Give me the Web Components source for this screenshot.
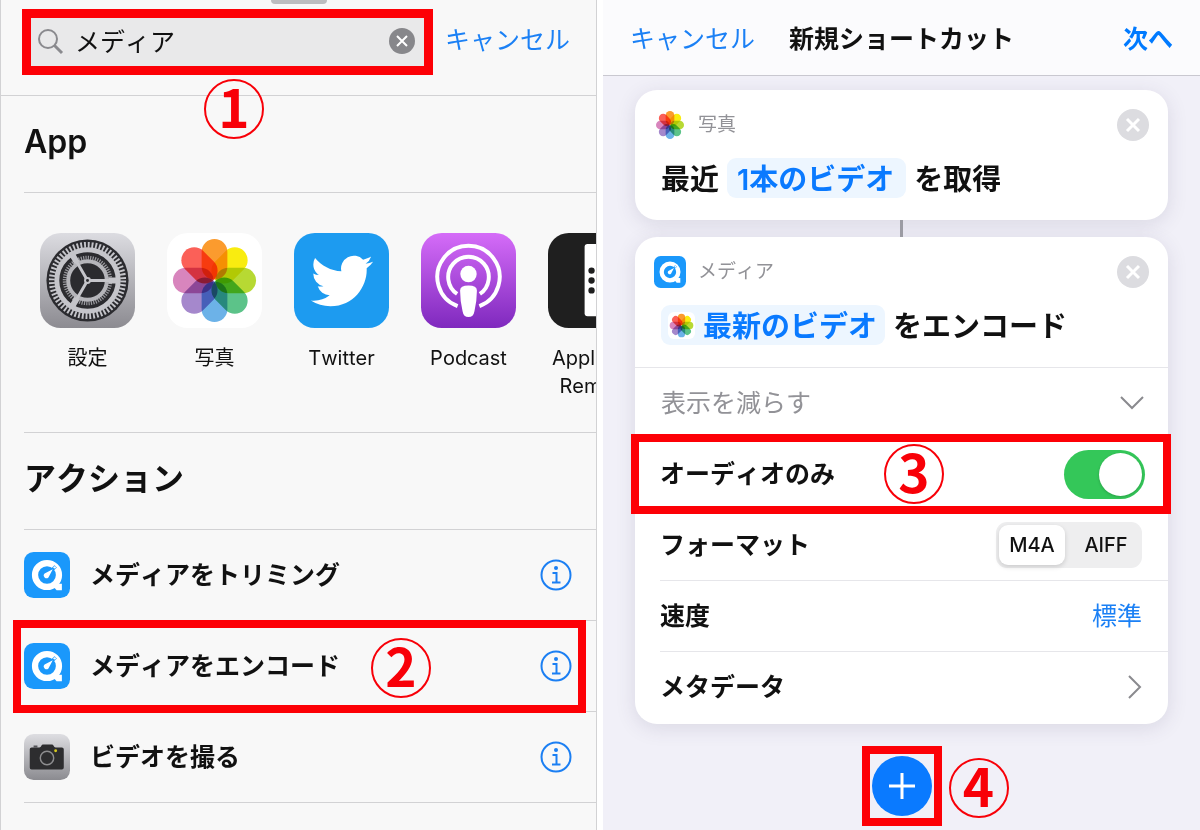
<!DOCTYPE html>
<html lang="ja">
<head>
<meta charset="utf-8">
<title>ショートカット</title>
<style>
    body {
        margin: 0;
        background: #fff;
        color: #111;
        font-family: Inter, "Noto Sans CJK JP", sans-serif;
        font-size: 25px;
        line-height: 36px;
        font-kerning: none;
    }
    main {
        display: grid;
        grid-template-columns: minmax(0, 1fr) minmax(0, 1fr);
        gap: 6px;
        min-height: 100vh;
    }
</style>
</head>
<body>
<main>
    <picker-panel>
        <search-bar slot="top" value="メディア" cancel="キャンセル" step="1"></search-bar>
        <list-section title="App">
            <app-shelf>
                <app-tile icon="settings">設定</app-tile>
                <app-tile icon="photos">写真</app-tile>
                <app-tile icon="twitter">Twitter</app-tile>
                <app-tile icon="podcast">Podcast</app-tile>
                <app-tile icon="remote">Apple TV Remote</app-tile>
            </app-shelf>
        </list-section>
        <list-section title="アクション">
            <action-row icon="quicktime">メディアをトリミング</action-row>
            <action-row icon="quicktime" step="2">メディアをエンコード</action-row>
            <action-row icon="camera">ビデオを撮る</action-row>
        </list-section>
    </picker-panel>

    <editor-panel title="新規ショートカット" back="キャンセル" next="次へ">
        <action-card icon="photos" name="写真">
            最近<variable-pill>1本のビデオ</variable-pill>を取得
        </action-card>
        <action-card icon="quicktime" name="メディア" linked>
            <variable-pill icon="photos">最新のビデオ</variable-pill>をエンコード
            <fold-row slot="rows">表示を減らす</fold-row>
            <toggle-row slot="rows" label="オーディオのみ" step="3"></toggle-row>
            <format-row slot="rows" label="フォーマット" options="M4A,AIFF"></format-row>
            <value-row slot="rows" label="速度" value="標準"></value-row>
            <more-row slot="rows" class="last">メタデータ</more-row>
        </action-card>
        <add-button step="4"></add-button>
    </editor-panel>
</main>

<script>
;(function(){
    'use strict';

    // rules every shadow root starts with
    const base = `
        *, *::after, *::before { box-sizing: border-box; }
        button, input {
            font: inherit;
            font-kerning: inherit;
            color: inherit;
            margin: 0;
            padding: 0;
            border: 0;
            background: none;
        }
        button { cursor: pointer; }
        svg { display: block; }
    `;

    const petals = ['#fb9b2e', '#f9ec10', '#b7d933', '#5cc389', '#6cb2e8', '#a588cc', '#d885bd', '#fb6058']
        .map((color, i) => `<rect x="-13" y="-42" width="26" height="41" rx="13" fill="${color}" transform="rotate(${i * 45})"/>`)
        .join('');

    const icons = {
        settings: `
            <linearGradient id="g" x2="0" y2="1"><stop stop-color="#dcdce1"/><stop offset="1" stop-color="#8c8b91"/></linearGradient>
            <rect width="96" height="96" rx="21" fill="url(#g)"/>
            <circle cx="48" cy="48" r="41.5" fill="#2b2b2f"/>
            <circle cx="48" cy="48" r="36" fill="none" stroke="#c5c5ca" stroke-width="6" stroke-dasharray="1.9 1.87"/>
            <circle cx="48" cy="48" r="31" fill="none" stroke="#c5c5ca" stroke-width="5"/>
            <circle cx="48" cy="48" r="23" fill="none" stroke="#9a9a9f" stroke-width="4" stroke-dasharray="1.2 1.2"/>
            <circle cx="48" cy="48" r="19.5" fill="none" stroke="#b5b5ba" stroke-width="4"/>
            <path d="M48 48H78M48 48L33 22M48 48L33 74" stroke="#c5c5ca" stroke-width="3"/>
            <path d="M69 48h11M37.5 30l-5.5-9M37.5 66l-5.5 9" stroke="#c5c5ca" stroke-width="6"/>
            <circle cx="48" cy="48" r="3.5" fill="#c5c5ca"/><circle cx="48" cy="48" r="1.5" fill="#2b2b2f"/>`,
        photos: `
            <rect width="96" height="96" rx="21" fill="#fff"/>
            <g class="petals" transform="translate(48 48)">${petals}</g>`,
        twitter: `
            <rect width="96" height="96" rx="21" fill="#1d9bf0"/>
            <path fill="#fff" transform="translate(17 17) scale(2.62)" d="M23.953 4.57a10 10 0 01-2.825.775 4.958 4.958 0 002.163-2.723c-.951.555-2.005.959-3.127 1.184a4.92 4.92 0 00-8.384 4.482C7.69 8.095 4.067 6.13 1.64 3.162a4.822 4.822 0 00-.666 2.475c0 1.71.87 3.213 2.188 4.096a4.904 4.904 0 01-2.228-.616v.06a4.923 4.923 0 003.946 4.827 4.996 4.996 0 01-2.212.085 4.936 4.936 0 004.604 3.417 9.867 9.867 0 01-6.102 2.105c-.39 0-.779-.023-1.17-.067a13.995 13.995 0 007.557 2.209c9.053 0 13.998-7.496 13.998-13.985 0-.21 0-.42-.015-.63A9.935 9.935 0 0024 4.59z"/>`,
        podcast: `
            <linearGradient id="g" x2="0" y2="1"><stop stop-color="#d56cf8"/><stop offset="1" stop-color="#7f29be"/></linearGradient>
            <rect width="96" height="96" rx="21" fill="url(#g)"/>
            <path d="M37 74A31.5 31.5 0 1 1 59 74M36.5 61.5A20.5 20.5 0 1 1 59.5 61.5" fill="none" stroke="#fff" stroke-width="4"/>
            <circle cx="48" cy="41.5" r="8.3" fill="#fff"/>
            <path d="M39.5 58q0-5 8.5-5t8.5 5q0 10-2.5 21-1 6-6 6t-6-6q-2.5-11-2.5-21z" fill="#fff"/>`,
        remote: `
            <rect width="96" height="96" rx="21" fill="#1f1f1f"/>
            <rect x="37" y="11" width="24" height="73" rx="3" fill="#fff"/>
            <g fill="#1f1f1f"><circle cx="44" cy="38" r="3.2"/><circle cx="44" cy="48" r="3.2"/><circle cx="44" cy="58" r="3.2"/></g>`,
        quicktime: `
            <rect width="96" height="96" rx="20" fill="#1a98fb"/>
            <circle cx="48" cy="48" r="25" fill="none" stroke="#fff" stroke-width="13"/>
            <path d="M56 66h23v14H68z" fill="#fff"/>
            <path d="M56 40L66 30" stroke="#1a98fb" stroke-width="7"/>
            <circle cx="64" cy="32" r="2.5" fill="#fff"/>
            <path d="M43 45L60 36L51 53A5.5 5.5 0 1 1 43 45z" fill="#fff"/>`,
        camera: `
            <linearGradient id="g" x2="0" y2="1"><stop stop-color="#dedee2"/><stop offset="1" stop-color="#8b8b90"/></linearGradient>
            <rect width="96" height="96" rx="20" fill="url(#g)"/>
            <path d="M20 24h8v4h-8z" fill="#55555a"/>
            <path d="M16 28h16q3 0 4-3t4-3h18q3 0 4 3t4 3h13q4 0 4 4v38q0 4-4 4H16q-4 0-4-4V32q0-4 4-4z" fill="#2d2d2f"/>
            <circle cx="48" cy="50" r="14" fill="none" stroke="#8d8d8f" stroke-width="3"/>
            <circle cx="66" cy="35" r="3" fill="#d5c81e"/>`
    };

    class BaseElement extends HTMLElement {

        constructor(){
            super();
            this._shadowRoot = this.attachShadow({ mode: 'open' });
        }

        connectedCallback(){
            this._shadowRoot.innerHTML = `<style>${base}${this.styles()}</style>${this.template()}`;
        }

        attr(name){
            return this.getAttribute(name) || '';
        }

        badge(){
            return this.hasAttribute('step') ? `<step-badge>${this.attr('step')}</step-badge>` : '';
        }
    }

    customElements.define('app-icon', class extends BaseElement {
        styles(){
            return `
                :host { display: block; flex: none; width: 46px; height: 46px; }
                svg { width: 100%; height: 100%; }
                .petals { isolation: isolate; }
                .petals rect { mix-blend-mode: multiply; }
            `;
        }
        template(){
            return `<svg viewBox="0 0 96 96" aria-hidden="true">${icons[this.attr('name')]}</svg>`;
        }
    });

    // red number in a ring, floats over whatever it marks
    customElements.define('step-badge', class extends BaseElement {
        styles(){
            return `
                :host {
                    position: absolute;
                    z-index: 3;
                    display: block;
                    width: 60px;
                    height: 60px;
                    border: 2px solid #f80008;
                    border-radius: 50%;
                    color: #f80008;
                    font: bold 53px/48px "Noto Sans CJK JP", sans-serif;
                    text-align: center;
                    box-sizing: border-box;
                    pointer-events: none;
                }
            `;
        }
        template(){
            return `<slot></slot>`;
        }
    });

    customElements.define('picker-panel', class extends BaseElement {
        styles(){
            return `
                :host {
                    position: relative;
                    display: block;
                    background: #f8f8f8;
                    border: solid #d2d2d4;
                    border-width: 0 1px;
                }
                .grip {
                    position: absolute;
                    top: -6px;
                    left: 50%;
                    width: 56px;
                    height: 10px;
                    margin-left: -28px;
                    border-radius: 4px;
                    background: #bcbcbf;
                }
            `;
        }
        template(){
            return `<div class="grip"></div><slot name="top"></slot><slot></slot>`;
        }
    });

    customElements.define('search-bar', class extends BaseElement {
        styles(){
            return `
                :host {
                    position: relative;
                    display: flex;
                    align-items: center;
                    gap: 12px;
                    padding: 9px 26px 20px 21px;
                    border-bottom: 1px solid #d2d2d4;
                }
                .field {
                    flex: 1;
                    min-width: 0;
                    display: flex;
                    align-items: center;
                    height: 66px;
                    padding: 0 8px 2px 6px;
                    border: 9px solid #fd0006;
                    background: #e9e9ea;
                }
                input { flex: 1; min-width: 0; height: 46px; margin-left: 11px; padding-bottom: 2px; outline: 0; }
                .cancel { padding-bottom: 4px; color: #1b80f5; white-space: nowrap; }
                step-badge { top: 79px; left: 203px; }
            `;
        }
        template(){
            return `
                <label class="field">
                    <svg width="27" height="27" fill="none" stroke="#8a8a8e" stroke-width="2" aria-label="検索">
                        <circle cx="11" cy="11" r="9"/><path d="M17 17l8 8" stroke-width="3"/>
                    </svg>
                    <input type="text" value="${this.attr('value')}">
                    <button class="clear" aria-label="消去">
                        <svg width="27" height="27"><circle cx="13" cy="13" r="13" fill="#87878b"/>
                        <path d="M8 8l10 10M18 8L8 18" stroke="#fff" stroke-width="2"/></svg>
                    </button>
                </label>
                <button class="cancel">${this.attr('cancel')}</button>
                ${this.badge()}
            `;
        }
        connectedCallback(){
            super.connectedCallback();
            const input = this._shadowRoot.querySelector('input');
            this._shadowRoot.querySelector('.clear').addEventListener('click', () => {
                input.value = '';
                input.focus();
            });
        }
    });

    customElements.define('list-section', class extends BaseElement {
        styles(){
            return `
                :host { display: block; padding-left: 23px; }
                h2 {
                    margin: 0;
                    padding: 22px 0 26px;
                    border-bottom: 1px solid #d2d2d4;
                    font-size: 32px;
                    line-height: 48px;
                    font-weight: 600;
                }
            `;
        }
        template(){
            return `<h2>${this.attr('title')}</h2><slot></slot>`;
        }
    });

    customElements.define('app-shelf', class extends BaseElement {
        styles(){
            return `
                :host {
                    display: flex;
                    gap: 32px;
                    padding: 40px 0 32px 16px;
                    border-bottom: 1px solid #d2d2d4;
                    overflow: hidden;
                }
            `;
        }
        template(){
            return `<slot></slot>`;
        }
    });

    customElements.define('app-tile', class extends BaseElement {
        styles(){
            return `
                :host { flex: none; width: 95px; font-size: 20px; line-height: 28px; text-align: center; }
                app-icon { width: 95px; height: 95px; margin-bottom: 16px; }
            `;
        }
        template(){
            return `<app-icon name="${this.attr('icon')}"></app-icon><slot></slot>`;
        }
    });

    customElements.define('action-row', class extends BaseElement {
        styles(){
            return `
                :host {
                    position: relative;
                    display: flex;
                    align-items: center;
                    gap: 20px;
                    height: 91px;
                    padding-right: 24px;
                    border-bottom: 1px solid #d2d2d4;
                    font-weight: 600;
                    box-sizing: border-box;
                }
                .name { flex: 1; }
                :host([step])::after {
                    content: "";
                    position: absolute;
                    z-index: 2;
                    inset: -1px 10px -2px -11px;
                    border: 8px solid #fd0006;
                    pointer-events: none;
                }
                step-badge { top: 17px; left: 347px; }
            `;
        }
        template(){
            return `
                <app-icon name="${this.attr('icon')}"></app-icon>
                <span class="name"><slot></slot></span>
                <button aria-label="情報">
                    <svg width="32" height="32" fill="none" stroke="#1b7ff3" stroke-width="2">
                        <circle cx="16" cy="16" r="14.5"/>
                        <path d="M12.5 14H16.5V23M12 23.5H20.5"/>
                        <circle cx="16" cy="9" r="2" fill="#1b7ff3" stroke="none"/>
                    </svg>
                </button>
                ${this.badge()}
            `;
        }
    });

    customElements.define('editor-panel', class extends BaseElement {
        styles(){
            return `
                :host { display: block; background: #f1f0f8; }
                header {
                    display: grid;
                    grid-template-columns: 1fr auto 1fr;
                    align-items: center;
                    height: 76px;
                    padding: 2px 27px 0;
                    border-bottom: 1px solid #c9c8d0;
                    background: #fbfbfd;
                    white-space: nowrap;
                }
                h1 { margin: 0; font: inherit; font-kerning: inherit; font-weight: 600; }
                button { justify-self: start; color: #1b80f5; }
                button.next { justify-self: end; color: #007aff; font-weight: 600; }
                .cards {
                    display: flex;
                    flex-direction: column;
                    padding: 14px 32px 0;
                }
            `;
        }
        template(){
            return `
                <header>
                    <button>${this.attr('back')}</button>
                    <h1>${this.attr('title')}</h1>
                    <button class="next">${this.attr('next')}</button>
                </header>
                <div class="cards"><slot></slot></div>
            `;
        }
    });

    customElements.define('action-card', class extends BaseElement {
        styles(){
            return `
                :host {
                    position: relative;
                    display: block;
                    border-radius: 22px;
                    background: #fff;
                    box-shadow: 0 4px 20px rgba(60, 55, 90, 0.13);
                }
                :host([linked]) { margin-top: 17px; }
                /* line that ties the card to the one above */
                :host([linked])::before {
                    content: "";
                    position: absolute;
                    top: -17px;
                    left: 50%;
                    width: 3px;
                    height: 17px;
                    margin-left: -2px;
                    background: #9b9ba3;
                }
                .head {
                    display: flex;
                    align-items: center;
                    gap: 12px;
                    padding: 19px 19px 0;
                    color: #929297;
                    font-size: 19px;
                    line-height: 32px;
                }
                .head span { flex: 1; }
                app-icon { width: 32px; height: 32px; }
                .text {
                    display: flex;
                    align-items: baseline;
                    gap: 8px;
                    padding: 17px 26px 22px;
                    font-size: 29px;
                    line-height: 36px;
                    font-weight: 600;
                    white-space: nowrap;
                }
            `;
        }
        template(){
            return `
                <div class="head">
                    <app-icon name="${this.attr('icon')}"></app-icon>
                    <span>${this.attr('name')}</span>
                    <button aria-label="削除">
                        <svg width="32" height="32"><circle cx="16" cy="16" r="16" fill="#dcdce0"/>
                        <path d="M10 10l12 12M22 10L10 22" stroke="#fff" stroke-width="3"/></svg>
                    </button>
                </div>
                <div class="text"><slot></slot></div>
                <slot name="rows"></slot>
            `;
        }
    });

    customElements.define('variable-pill', class extends BaseElement {
        styles(){
            return `
                :host {
                    display: inline-block;
                    padding: 4px 12px 0 10px;
                    border-radius: 9px;
                    background: #edf6ff;
                    color: #0a7aff;
                }
                :host([icon]) { padding: 4px 8px 0 7px; }
                app-icon { float: left; width: 27px; height: 27px; margin: 3px 8px 0 0; }
            `;
        }
        template(){
            const icon = this.attr('icon');
            return `${icon ? `<app-icon name="${icon}"></app-icon>` : ''}<slot></slot>`;
        }
    });

    const rowStyles = `
        :host {
            position: relative;
            display: flex;
            align-items: center;
            height: 71px;
            margin-left: 25px;
            padding-right: 26px;
            border-top: 1px solid #e6e6ea;
            font-weight: 600;
            box-sizing: border-box;
        }
        :host(.last) { height: 73px; padding-bottom: 2px; }
        .label { flex: 1; }
    `;

    customElements.define('fold-row', class extends BaseElement {
        styles(){
            return rowStyles + `
                :host { margin-left: 0; padding: 0 24px 0 26px; color: #929297; font-weight: 400; }
                button { flex: 1; display: flex; align-items: center; justify-content: space-between; }
            `;
        }
        template(){
            return `<button aria-expanded="true"><slot></slot>
                <svg width="24" height="14" fill="none" stroke="#8a8a8e" stroke-width="2"><path d="M1 1l11 11L23 1"/></svg></button>`;
        }
    });

    customElements.define('toggle-row', class extends BaseElement {
        styles(){
            return rowStyles + `
                :host { padding-right: 23px; }
                :host([step])::after {
                    content: "";
                    position: absolute;
                    z-index: 2;
                    inset: -5px -3px -5px -29px;
                    border: 8px solid #fd0006;
                    pointer-events: none;
                }
                input {
                    appearance: none;
                    display: flex;
                    width: 81px;
                    height: 49px;
                    padding: 3px;
                    border-radius: 25px;
                    background: #e9e9eb;
                }
                input::before {
                    content: "";
                    width: 43px;
                    height: 43px;
                    border-radius: 50%;
                    background: #fff;
                    box-shadow: 0 1px 3px rgba(0, 0, 0, 0.2);
                }
                input:checked { justify-content: flex-end; background: #34c759; }
                step-badge { top: 5px; left: 224px; }
            `;
        }
        template(){
            return `
                <label class="label" for="toggle">${this.attr('label')}</label>
                <input id="toggle" type="checkbox" role="switch" checked>
                ${this.badge()}
            `;
        }
    });

    customElements.define('format-row', class extends BaseElement {
        styles(){
            return rowStyles + `
                .segments {
                    display: flex;
                    gap: 8px;
                    height: 46px;
                    padding: 3px;
                    border-radius: 11px;
                    background: #eeeeef;
                    font-size: 20px;
                    line-height: 40px;
                    font-weight: 500;
                }
                .segments label {
                    width: 66px;
                    border-radius: 9px;
                    text-align: center;
                }
                .segments label:has(:checked) {
                    background: #fff;
                    box-shadow: 0 2px 5px rgba(0, 0, 0, 0.15);
                }
                input { appearance: none; position: absolute; }
            `;
        }
        template(){
            const options = this.attr('options').split(',').map((name, i) =>
                `<label><input type="radio" name="format"${i === 0 ? ' checked' : ''}>${name}</label>`).join('');
            return `
                <span class="label" id="label">${this.attr('label')}</span>
                <div class="segments" role="radiogroup" aria-labelledby="label">${options}</div>
            `;
        }
    });

    customElements.define('value-row', class extends BaseElement {
        styles(){
            return rowStyles + `
                button { color: #1b80f5; font-weight: 400; }
            `;
        }
        template(){
            return `<label class="label" for="value">${this.attr('label')}</label>
                <button id="value">${this.attr('value')}</button>`;
        }
    });

    customElements.define('more-row', class extends BaseElement {
        styles(){
            return rowStyles + `
                button { flex: 1; display: flex; align-items: center; justify-content: space-between; font-weight: 600; }
            `;
        }
        template(){
            return `<button><slot></slot>
                <svg width="14" height="24" fill="none" stroke="#8a8a8e" stroke-width="2"><path d="M1 1l11 11L1 23"/></svg></button>`;
        }
    });

    customElements.define('add-button', class extends BaseElement {
        styles(){
            return `
                :host {
                    position: relative;
                    align-self: center;
                    margin: 22px 0 3px;
                    padding: 2px;
                    border: 8px solid #fd0006;
                }
                button {
                    display: grid;
                    place-items: center;
                    width: 60px;
                    height: 60px;
                    border-radius: 50%;
                    background: #0a7aff;
                }
                step-badge { top: 4px; left: 79px; }
            `;
        }
        template(){
            return `
                <button aria-label="追加">
                    <svg width="26" height="26" stroke="#fff" stroke-width="3"><path d="M13 0v26M0 13h26"/></svg>
                </button>
                ${this.badge()}
            `;
        }
    });

})();
</script>
</body>
</html>
